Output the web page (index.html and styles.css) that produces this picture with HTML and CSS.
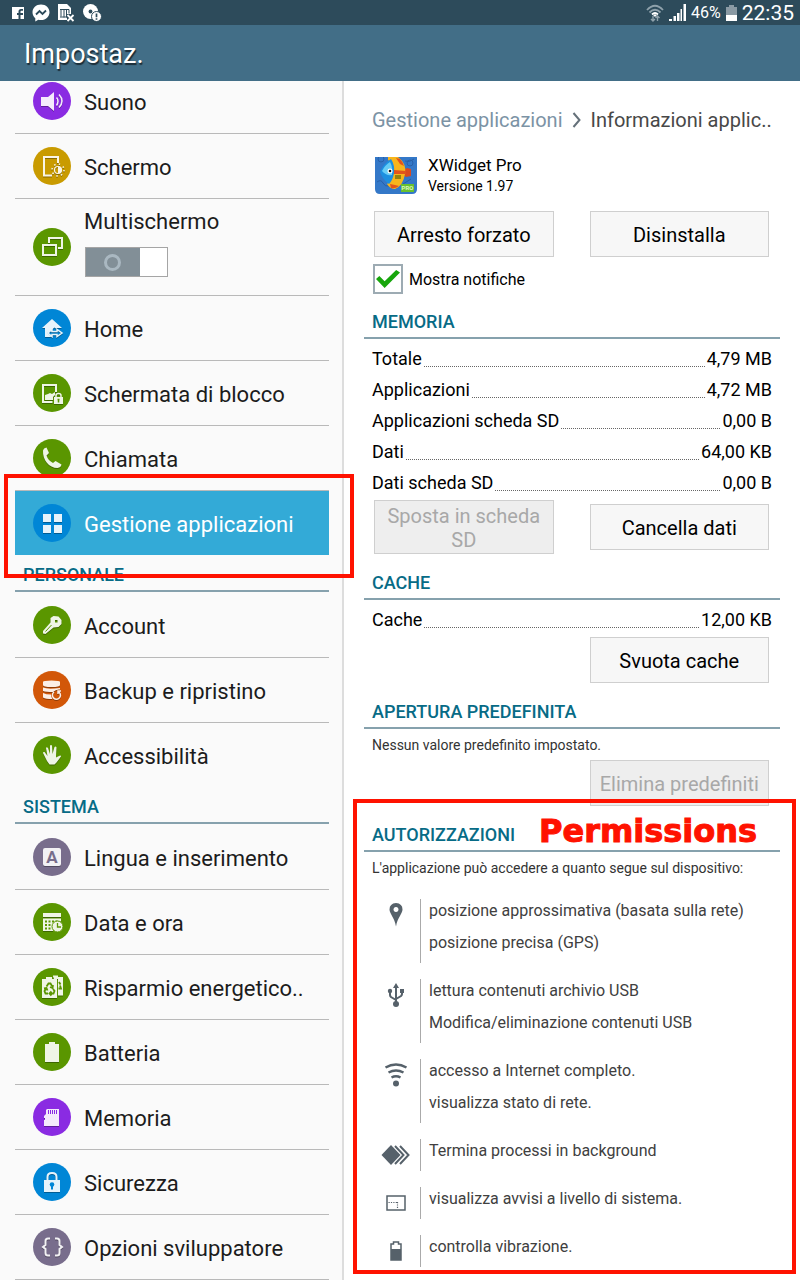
FILE: index.html
```html
<!DOCTYPE html>
<html lang="it">
<head>
<meta charset="utf-8">
<meta name="viewport" content="width=device-width, initial-scale=1">
<title>Impostaz.</title>
<link rel="stylesheet" href="styles.css">
</head>
<body>
<header class="top">
  <div class="status">
    <div class="status-left">
      <svg width="12" height="12" viewBox="0 0 12 12"><path fill="#fff" fill-rule="evenodd" d="M0 0h12v12H8.500V8H11V6H8.500V4.500q0-.8.8-.8H11V2H9Q6.500 2 6.500 4.500V6H5v2h1.500v4H0z"/></svg>
      <svg width="18" height="18" viewBox="0 0 18 18"><path fill="#fff" d="M9 .5C4 .5.500 4 .5 8.300c0 2.500 1 4.500 2.800 5.900V17.500l3-1.700c.9.200 1.700.3 2.700.3 5 0 8.500-3.500 8.500-7.800S14 .5 9 .5z"/><path d="M4 10.500 7.500 7l3 3L14 6.500" fill="none" stroke="#2d4b5b" stroke-width="1.800"/></svg>
      <svg width="17" height="18" viewBox="0 0 17 18"><path fill="#fff" d="M0 0h9l4 4v6H9v6H0z"/><path d="M2 5.500h9M3 5.500v7M6 5.500v8M8.500 5.500v8M11 5.500v4M2 13h7" stroke="#2d4b5b" stroke-width="1" fill="none"/><path d="m9.500 11 6 6m0-6-6 6" stroke="#fff" stroke-width="1.800"/></svg>
      <svg width="19" height="18" viewBox="0 0 19 18"><circle cx="7.500" cy="7.500" r="7.500" fill="#fff"/><circle cx="7.500" cy="7.500" r="1.900" fill="#2d4b5b"/><circle cx="13.500" cy="12.500" r="5" fill="#fff" stroke="#2d4b5b"/><path d="M13.500 9.500v3.800m0 1v1.500" stroke="#2d4b5b" stroke-width="1.700"/></svg>
    </div>
    <div class="status-right">
      <svg width="18" height="18" viewBox="0 0 18 18" fill="none" stroke-width="1.800"><path stroke="#8fa1ab" d="M1 6q8-8.500 16 0M3.500 8.500q5.500-5.500 11 0"/><path stroke="#fff" d="M6 10.500q3-3 6 0"/><path fill="#fff" d="m9 13-2-2q2-1.500 4 0z"/><path stroke="#8fa1ab" stroke-width="1.400" d="M7 12v5M5 15l2 2 2-2M11.500 17v-5M9.500 14l2-2 2 2"/></svg>
      <svg width="17" height="17" viewBox="0 0 17 17" fill="#fff"><path d="M0 15h3v2H0zM4.500 12H7v5H4.500zM8 9h2.500v8H8zM11.500 5H13v12h-1.500zM14.500 0H17v17h-2.500z"/></svg>
      <span class="percent">46%</span>
      <svg width="11" height="16" viewBox="0 0 11 16"><path fill="#8a9aa4" d="M0 2h3V0h5v2h3v8H0z"/><path fill="#fff" d="M0 10h11v6H0z"/></svg>
      <time class="clock">22:35</time>
    </div>
  </div>
  <h1 class="title">Impostaz.</h1>
</header>
<main class="panes">
  <nav class="menu" aria-label="Impostazioni">
    <ul class="list">
      <li><a class="row" href="#"><svg class="icon violet" viewBox="0 0 38 38"><g class="glyph"><path d="M8 15h7l6-5v19l-6-5H8z"/><path class="line" stroke-width="1.500" d="M23.500 15.500q3 3.500 0 8M26 12.500q6 6.500 0 13"/></g></svg><span>Suono</span></a></li>
      <li><a class="row" href="#"><svg class="icon gold" viewBox="0 0 38 38"><g class="glyph"><path class="line" stroke-width="2" d="M25 16v-6H11v18.500h8"/><circle class="line" cx="25" cy="23" r="3.500" stroke-width="1.200"/><path d="M25 19.500a3.500 3.500 0 0 1 0 7z"/><circle class="line" cx="25" cy="23" r="6" stroke-width="1.500" stroke-dasharray="1.500 3.210"/></g></svg><span>Schermo</span></a></li>
      <li><div class="row tall"><svg class="icon green" viewBox="0 0 38 38"><g class="glyph"><path class="line" stroke-width="2" d="M16 15v-5h13v10h-4M10 17h13v10H10z"/></g></svg><div class="stack"><label for="multi">Multischermo</label><input class="toggle" id="multi" type="checkbox" role="switch"></div></div></li>
      <li><a class="row" href="#"><svg class="icon blue" viewBox="0 0 38 38"><g class="glyph"><path d="m19 10 10 9h-5.500v1l-2-1.500-7 5.500 4 4H12v-9H9z"/><path class="line" stroke-width="1.500" d="m19 20.500-4 3.500 4 3.500v-2h5v2l5-3.500-5-3.500v2h-5z"/></g></svg><span>Home</span></a></li>
      <li><a class="row" href="#"><svg class="icon green" viewBox="0 0 38 38"><g class="glyph"><path class="line" stroke-width="2" d="M23 18v-7H10v17h9.500"/><path d="m12 21 3-1 2-1 2 1 3-2v3l-2 2v3h-8z"/><path d="M21 23h9v7h-9z"/><path class="line" stroke-width="1.500" d="M23 23v-1.500q0-2 2.500-2t2.500 2V23"/></g><path d="M25.500 25v3.500M24.500 25.500h2" stroke="#5a9600" stroke-width="1.500"/></svg><span>Schermata di blocco</span></a></li>
      <li><a class="row" href="#"><svg class="icon green" viewBox="0 0 38 38"><g class="glyph"><path d="M10 11.500q.5-2.500 3.500-3l2.500 5.500-2.500 2.500q1.500 5 6.500 7.500l2.500-2 6 3.500q-.5 3-4 3.500C16 29 9.500 21 10 11.500z"/></g></svg><span>Chiamata</span></a></li>
      <li class="marked"><a class="row selected" href="#" aria-current="page"><svg class="icon blue" viewBox="0 0 38 38"><g class="glyph"><path d="M10 10h8v8h-8zM21 10h8v8h-8zM10 21h8v8h-8zM21 21h8v8h-8z"/></g></svg><span>Gestione applicazioni</span></a><span class="frame frame-row"></span></li>
    </ul>
    <h2 class="group">PERSONALE</h2>
    <ul class="list">
      <li><a class="row" href="#"><svg class="icon green" viewBox="0 0 38 38"><g class="glyph"><path fill-rule="evenodd" d="m17.500 12 3-2 5 .5 3 3.500v4l-3 3-5 .5-8 6.500-2.500-.5v-2.500l7.500-8.500zM22 14v2.500h2.500V14z"/></g><path d="m12.500 25.500 6-6.500" stroke="#5a9600"/></svg><span>Account</span></a></li>
      <li><a class="row" href="#"><svg class="icon orange" viewBox="0 0 38 38"><g class="glyph"><path d="M10 11q0-1.500 8.500-1.500T27 11v3q0 2-8.500 2T10 14zM10 16.500q4 2 17 .5v1.500q-4-.5-7 2.500-7 0-10-1zM10 22q3 1.500 8 1.500 0 2.500 1.500 4.500-7 0-9.500-1.500z"/><path class="line" stroke-width="1.500" d="M21 21a4 4 0 1 0 4-.5M25 23v-3h3"/></g></svg><span>Backup e ripristino</span></a></li>
      <li><a class="row" href="#"><svg class="icon green" viewBox="0 0 38 38"><g class="glyph"><path d="M14 25 10 17q0-1.500 1.500-1l3 4-1.500-8q.5-1.500 2 0l2 6V9.500q1-1 2 0l.5 8.500 2-7q1.500-1 2 .5L23 19.500v2l3-1.500q2-1 2 .5l-4.500 6-2 2h-5z"/></g></svg><span>Accessibilità</span></a></li>
    </ul>
    <h2 class="group">SISTEMA</h2>
    <ul class="list">
      <li><a class="row" href="#"><svg class="icon mauve" viewBox="0 0 38 38" aria-hidden="true"><g class="glyph"><rect x="10" y="10" width="18" height="18" rx="2"/></g><text class="key" x="19" y="25" text-anchor="middle">A</text></svg><span>Lingua e inserimento</span></a></li>
      <li><a class="row" href="#"><svg class="icon green" viewBox="0 0 38 38"><g class="glyph"><path d="M10 10h18v4H10zM10 15.500h18v3h-3l-5 3V28H10z"/></g><path d="M12 17.500h2v2h-2zm3.500 0h2v2h-2zm3.500 0h2v2h-2zm3.500 0h2v1.500h-2zM12 21h2v2h-2zm3.500 0h2v2h-2zM12 24.500h2v2h-2zm3.500 0h2v2h-2z" fill="#5a9600"/><circle cx="24.500" cy="23.500" r="5.500" fill="#eef3e4" stroke="#5a9600"/><path d="M24.500 20v4h3.500" fill="none" stroke="#5a9600" stroke-width="1.300"/></svg><span>Data e ora</span></a></li>
      <li><a class="row" href="#"><svg class="icon green" viewBox="0 0 38 38"><g class="glyph"><path d="M20 8.500v-1h5V9h5v18.500h-5V11h-4zM9 11h4V9h6v2h5v19H9z"/></g><g fill="none" stroke="#5a9600" stroke-width="1.800"><path d="m13.500 18.500 2-3h2l1.500 2.500m1-1-.5 3-2.500-1M20 21l1.500 2-1 2.500h-4m2-2-2 2 2 2M15 25.500h-2.500L11.500 23l1.500-2.500m-2 0 2.500-.5 1 2.500"/><path d="m26 14 1.500 2.500M25.500 20.500h2.500l-1-3"/></g></svg><span>Risparmio energetico..</span></a></li>
      <li><a class="row" href="#"><svg class="icon green" viewBox="0 0 38 38"><g class="glyph"><path d="M12 11h4V9h6v2h4v18H12z"/></g></svg><span>Batteria</span></a></li>
      <li><a class="row" href="#"><svg class="icon violet" viewBox="0 0 38 38"><g class="glyph"><path d="M14 11h12v17H11v-6h1v-2h-1v-2l2-2v-4z"/></g><path d="M15.500 12v4m2-4v4m2-4v4m2-4v4m2-4v4" stroke="#8a2be2"/></svg><span>Memoria</span></a></li>
      <li><a class="row" href="#"><svg class="icon blue" viewBox="0 0 38 38"><g class="glyph"><path d="M11 17h16v12H11z"/><path class="line" stroke-width="2" d="M14.500 17v-3q0-4 4.500-4t4.500 4v3"/></g><path d="M19 21.500v5" stroke="#0086d6" stroke-width="2"/><circle cx="19" cy="21.500" r="2.300" fill="#0086d6"/></svg><span>Sicurezza</span></a></li>
      <li><a class="row last" href="#"><svg class="icon mauve" viewBox="0 0 38 38"><g class="glyph"><path class="line" stroke-width="2" d="M17 10.500h-2q-2.500 0-2.500 2.500v4L10 19l2.500 2v4q0 2.500 2.500 2.500h2M22 10.500h2q2.500 0 2.500 2.500v4l2.500 2-2.500 2v4q0 2.500-2.500 2.500h-2"/></g></svg><span>Opzioni sviluppatore</span></a></li>
    </ul>
  </nav>
  <article class="detail">
    <nav class="crumbs" aria-label="Percorso">
      <a class="crumb-link" href="#">Gestione applicazioni</a>
      <svg width="10" height="16" viewBox="0 0 10 16"><path d="m1.500 1 6 7-6 7" fill="none" stroke="#65717a" stroke-width="2"/></svg>
      <span>Informazioni applic..</span>
    </nav>
    <div class="app">
      <svg class="app-icon" viewBox="0 0 42 37">
        <path fill="#3478c8" d="M0 0h42v32q0 5-5 5H5q-5 0-5-5z"/>
        <g fill="none" stroke="#2860a8"><circle cx="6" cy="2" r="3"/><circle cx="35" cy="6" r="3"/><path d="M2 25q4-3 6 1t6 3M30 4q4 2 9-2M28 27l8-5"/></g>
        <path fill="#d94a20" d="m28 13 4-2 4 1v7l-5 1-4-3z"/>
        <path fill="#f7b51c" d="M13 0h10q9 7 7 17-2 12-10 15-5 0-8-5 6-4 6-13T13 3z"/>
        <path fill="#e2541c" d="m21 1 4 1q3 3 4 7l-4-2zM15 27l5 1 4 1q-4 3-8 2z"/>
        <path fill="#1c8fe0" d="M5 15Q8 7 16 2q4 6 3 14-1 7-5 11-6-4-9-12z"/>
        <path fill="#66cdf6" d="M7 14q3-6 8-9 3 5 2 13-6 1-10-4z"/>
        <path fill="#e2541c" d="m19 13 12 1v3H19z"/><path fill="#94810e" d="M20 18h6v4h-6z"/>
        <circle cx="15" cy="14" r="2.500" fill="#fff"/><circle cx="15" cy="14" r="1.300" fill="#111"/>
        <path fill="#69c12e" d="M26 27h13v8H26z"/><text class="badge" x="32.500" y="33" text-anchor="middle">PRO</text>
      </svg>
      <div><h2 class="app-name">XWidget Pro</h2><p class="version">Versione 1.97</p></div>
    </div>
    <div class="actions">
      <button class="btn" type="button">Arresto forzato</button>
      <button class="btn" type="button">Disinstalla</button>
    </div>
    <div class="notify"><input class="check" type="checkbox" id="notify" checked><label for="notify">Mostra notifiche</label></div>

    <section>
      <h3 class="heading">MEMORIA</h3>
      <dl class="sizes">
        <div class="size"><dt>Totale</dt><dd>4,79 MB</dd></div>
        <div class="size"><dt>Applicazioni</dt><dd>4,72 MB</dd></div>
        <div class="size"><dt>Applicazioni scheda SD</dt><dd>0,00 B</dd></div>
        <div class="size"><dt>Dati</dt><dd>64,00 KB</dd></div>
        <div class="size"><dt>Dati scheda SD</dt><dd>0,00 B</dd></div>
      </dl>
      <div class="actions spaced">
        <button class="btn" type="button" disabled>Sposta in scheda SD</button>
        <button class="btn" type="button">Cancella dati</button>
      </div>
    </section>
    <section>
      <h3 class="heading">CACHE</h3>
      <dl class="sizes"><div class="size"><dt>Cache</dt><dd>12,00 KB</dd></div></dl>
      <div class="actions spaced"><button class="btn second" type="button">Svuota cache</button></div>
    </section>
    <section>
      <h3 class="heading">APERTURA PREDEFINITA</h3>
      <p class="note">Nessun valore predefinito impostato.</p>
      <div class="actions spaced after-note"><button class="btn second" type="button" disabled>Elimina predefiniti</button></div>
    </section>
    <section class="marked">
      <h3 class="heading">AUTORIZZAZIONI</h3>
      <p class="note">L'applicazione può accedere a quanto segue sul dispositivo:</p>
      <ul class="perms">
        <li class="perm"><svg width="32" height="32" viewBox="0 0 32 32"><path fill="#56616a" fill-rule="evenodd" d="M16 4q6.500.500 6.500 6.500c0 4-5 8-6.500 17-1.500-9-6.500-13-6.500-17Q9.500 4.500 16 4zm0 4a2.500 2.500 0 1 0 .01 0z"/></svg><div class="perm-text"><p>posizione approssimativa (basata sulla rete)</p><p>posizione precisa (GPS)</p></div></li>
        <li class="perm"><svg width="32" height="32" viewBox="0 0 32 32"><g fill="none" stroke="#56616a" stroke-width="2"><path d="M16 7v19M10 12v4q0 1 1 2l5 3M22 12v3q0 1-1 2l-5 3"/></g><path fill="#56616a" d="m16 4 3 5h-6zM20 10h4v4h-4z"/><circle cx="10" cy="12" r="2.200" fill="#56616a"/><circle cx="16" cy="25" r="3" fill="#56616a"/></svg><div class="perm-text"><p>lettura contenuti archivio USB</p><p>Modifica/eliminazione contenuti USB</p></div></li>
        <li class="perm"><svg width="32" height="32" viewBox="0 0 32 32"><g fill="none" stroke="#56616a" stroke-width="2.500"><path d="M5.500 8.500q10.500-6 21 0M8.500 13.500q7.500-4 15 0M11.500 18.500q4.500-2.500 9 0"/></g><circle cx="16" cy="24.500" r="3" fill="#56616a"/></svg><div class="perm-text"><p>accesso a Internet completo.</p><p>visualizza stato di rete.</p></div></li>
        <li class="perm"><svg width="32" height="32" viewBox="0 0 32 32"><path fill="#56616a" d="m11 6 9.500 10-9.500 10L1.500 16z"/><path fill="none" stroke="#56616a" stroke-width="2" d="m15 7 8.500 9-8.500 9M20 7l8.500 9-8.500 9"/></svg><div class="perm-text"><p>Termina processi in background</p></div></li>
        <li class="perm"><svg width="32" height="32" viewBox="0 0 32 32"><path fill="none" stroke="#56616a" stroke-width="1.500" d="M7 9h18v14H7z"/><path stroke="#56616a" stroke-width="1.200" stroke-dasharray="1.200 1.200" d="M8.500 15.500H18M17.500 15v7"/></svg><div class="perm-text"><p>visualizza avvisi a livello di sistema.</p></div></li>
        <li class="perm"><svg width="32" height="32" viewBox="0 0 32 32"><path fill="none" stroke="#56616a" stroke-width="1.500" d="M11 25V9h2.500V7h5v2H21v16z"/><path fill="#56616a" d="M11 14h10v11H11z"/></svg><div class="perm-text"><p>controlla vibrazione.</p></div></li>
      </ul>
      <span class="frame frame-perms"></span>
      <strong class="callout">Permissions</strong>
    </section>
  </article>
</main>
</body>
</html>
```
FILE: styles.css
```css
* { box-sizing: border-box; }
body, h1, h2, h3, p, ul, dl, dd { margin: 0; padding: 0; }
ul { list-style: none; }
a { color: inherit; text-decoration: none; }
svg { display: block; flex: none; }

body {
  min-height: 100vh;
  display: flex;
  flex-direction: column;
  background: #fff;
  color: #000;
  font-family: Roboto, "Noto Sans", sans-serif;
  font-size: 18px;
}

/* Header */
.top { position: relative; z-index: 2; color: #fff; background: #426e87; }
.status {
  display: flex;
  justify-content: space-between;
  align-items: center;
  height: 25px;
  padding: 0 6px 0 12px;
  background: #2d4b5b;
}
.status-left { display: flex; align-items: center; gap: 8px; }
.status-right { display: flex; align-items: center; gap: 5px; }
.percent { font-size: 16px; }
.clock { font-size: 21px; line-height: 24px; }
.title {
  padding: 13px 24px 11px;
  font-size: 27px;
  font-weight: 400;
  line-height: 32px;
  text-shadow: 1px 2px 1px rgba(0, 0, 0, .6);
}

.panes { flex: 1; display: grid; grid-template-columns: 43% minmax(0, 1fr); }

/* Settings menu, scrolled slightly under the header */
.menu {
  margin-top: -12px;
  padding: 0 13px 0 15px;
  border-right: 2px solid #ddd;
  background: #fafafa;
}
.row {
  display: flex;
  align-items: center;
  gap: 13px;
  min-height: 64px;
  padding-left: 18px;
  color: #1c1c1c;
  font-size: 22px;
  line-height: 28px;
}
.row > span { padding-top: 3px; }
.list li { border-bottom: 1px solid #b9b9b9; }
.list:not(:last-child) li:last-child { border-bottom: 0; }
.stack { display: flex; flex-direction: column; gap: 11px; padding: 9px 0 18px; }
.selected { background: #33aad7; color: #fff; }
.group {
  margin-bottom: 1px;
  padding: 6px 8px 2px;
  border-bottom: 2px solid #86a1ad;
  color: #076b86;
  font-size: 18px;
  font-weight: 500;
  line-height: 27px;
}

.icon { width: 38px; height: 38px; border-radius: 50%; }
.violet { background: #8a2be2; }
.gold { background: #c99b00; }
.green { background: #5a9600; }
.blue { background: #0086d6; }
.orange { background: #d25708; }
.mauve { background: #786d8c; }
.glyph { fill: #fff; opacity: .9; filter: drop-shadow(0 1px 0 rgba(0, 0, 0, .35)); }
.line { fill: none; stroke: #fff; }
.key { fill: #786d8c; font-size: 17px; font-weight: 700; }

.toggle {
  appearance: none;
  display: grid;
  place-items: center;
  width: 83px;
  height: 30px;
  margin: 0 0 0 1px;
  padding-right: 29px;
  border: 1px solid #a5a5a5;
  background: linear-gradient(to right, #828f97 54px, #fff 54px);
}
.toggle::before {
  content: "";
  width: 11px;
  height: 11px;
  border: 3px solid #aab8c1;
  border-radius: 50%;
}

/* Application details */
.detail { padding: 0 20px 13px; }
.crumbs {
  display: flex;
  align-items: center;
  gap: 9px;
  padding: 27px 8px 23px;
  color: #484848;
  font-size: 20px;
  line-height: 24px;
  white-space: nowrap;
}
.crumb-link { color: #7c93a5; }
.app { display: flex; gap: 11px; padding: 0 11px 14px; }
.app-icon { width: 42px; height: 37px; margin-top: 2px; }
.badge { fill: #d9f5c4; font-size: 6px; font-weight: 700; }
.app-name { font-size: 17px; font-weight: 400; line-height: 20px; }
.version { font-size: 14px; line-height: 22px; }

.actions {
  display: grid;
  grid-template-columns: 1fr 1fr;
  align-items: center;
  gap: 36px;
  padding: 0 11px 0 10px;
}
.spaced { margin: 2px 0 1px; }
.after-note { margin-top: 5px; }
.second { grid-column: 2; }
.btn {
  min-height: 46px;
  padding: 3px 8px 1px;
  border: 1px solid #cfcfcf;
  background: #f7f7f7;
  color: #000;
  font-family: inherit;
  font-size: 20px;
  line-height: 24px;
}
.btn:disabled { background: #eee; color: #a8a8a8; }

.notify { display: flex; align-items: center; gap: 6px; padding: 7px 9px 0; font-size: 16px; }
.check {
  appearance: none;
  width: 30px;
  height: 30px;
  margin: 0;
  border: 2px solid #9dabb3;
  background: #fff;
}
.check:checked::before {
  content: "";
  display: block;
  width: 24px;
  height: 18px;
  margin: 4px 1px;
  background: #17a60c;
  clip-path: polygon(0 50%, 14% 34%, 36% 62%, 84% 0, 100% 14%, 36% 100%);
}

.heading {
  padding: 16px 8px 3px;
  border-bottom: 2px solid #86a1ad;
  color: #076b86;
  font-size: 18px;
  font-weight: 500;
  line-height: 24px;
}
.sizes { padding: 4px 8px 0; }
.size { display: flex; gap: 2px; line-height: 31px; }
.size::before {
  content: "";
  order: 1;
  flex: 1;
  height: 23px;
  border-bottom: 1px dotted #666;
}
.size dd { order: 2; }
.note { padding: 6px 8px 0; color: #333; font-size: 14px; line-height: 20px; }

.perms { display: grid; gap: 16px; padding: 21px 16px 0; color: #404040; font-size: 16px; line-height: 24px; }
.perm { display: flex; gap: 8px; }
.perm-text { flex: 1; padding-left: 8px; border-left: 1px solid #aaa; }
.perm-text p { padding-bottom: 8px; }

/* Annotations laid over the screen */
.marked { position: relative; }
.frame { position: absolute; z-index: 1; border: 4px solid #ff1200; pointer-events: none; }
.frame-row { inset: -17px -25px -23px -11px; }
.frame-perms { inset: -8px -16px -7px -11px; }
.callout {
  position: absolute;
  top: 8px;
  left: 175px;
  color: #ff1200;
  font-family: "DejaVu Sans", Inter, sans-serif;
  font-size: 32px;
  font-weight: 700;
  line-height: 32px;
  -webkit-text-stroke: 1px #ff1200;
}
```
